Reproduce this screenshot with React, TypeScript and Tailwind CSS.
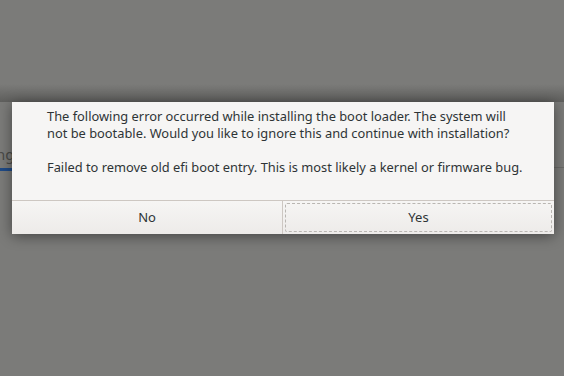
export default function App() {
  return (
    <div className="relative w-[564px] h-[376px] overflow-hidden bg-[#7b7b79] font-['Noto_Sans',sans-serif]">
      {/* dimmed page behind the dialog */}
      <div className="absolute inset-x-0 top-[84px] flex flex-col">
        <div className="h-[18px] bg-gradient-to-b from-transparent to-[#5f5f5d]" />
        <div className="flex justify-between pt-[42px]">
          <div className="w-[12px] overflow-hidden">
            <span className="ml-[-4px] block text-[15px] leading-[20px] text-[#4a4a48]">ng</span>
            <div className="mt-[4px] h-[3px] bg-[#1f4a86]" />
          </div>
          <div className="w-[12px] pt-[23px]">
            <div className="h-px bg-[#6a6a68]" />
          </div>
        </div>
      </div>

      <div className="relative mt-[102px] ml-[12px] w-[542px] h-[132px] flex flex-col bg-[#f6f5f4] shadow-[0_2px_14px_rgba(0,0,0,0.45)] rounded-b-[2px]">
        <div className="flex-1 pl-[35px] pt-[6px] text-[12.85px] leading-[17px] text-[#2e3436] whitespace-nowrap">
          <p>
            The following error occurred while installing the boot loader. The system will
            <br />
            not be bootable. Would you like to ignore this and continue with installation?
          </p>
          <p className="mt-[17px]">
            Failed to remove old efi boot entry. This is most likely a kernel or firmware bug.
          </p>
        </div>
        <div className="flex h-[34px] border-t border-[#cdc7c2]">
          <button className="w-[271px] border-r border-[#cdc7c2] bg-gradient-to-b from-[#f6f5f4] to-[#edebe9] text-[13px] text-[#2e3436] font-['Noto_Sans',sans-serif]">
            No
          </button>
          <button className="flex-1 p-[2px] bg-gradient-to-b from-[#f6f5f4] to-[#edebe9] text-[13px] text-[#2e3436] font-['Noto_Sans',sans-serif]">
            <span className="flex h-full items-center justify-center border border-dashed border-[#b9b6b2] rounded-[2px]">Yes</span>
          </button>
        </div>
      </div>
    </div>
  );
}
